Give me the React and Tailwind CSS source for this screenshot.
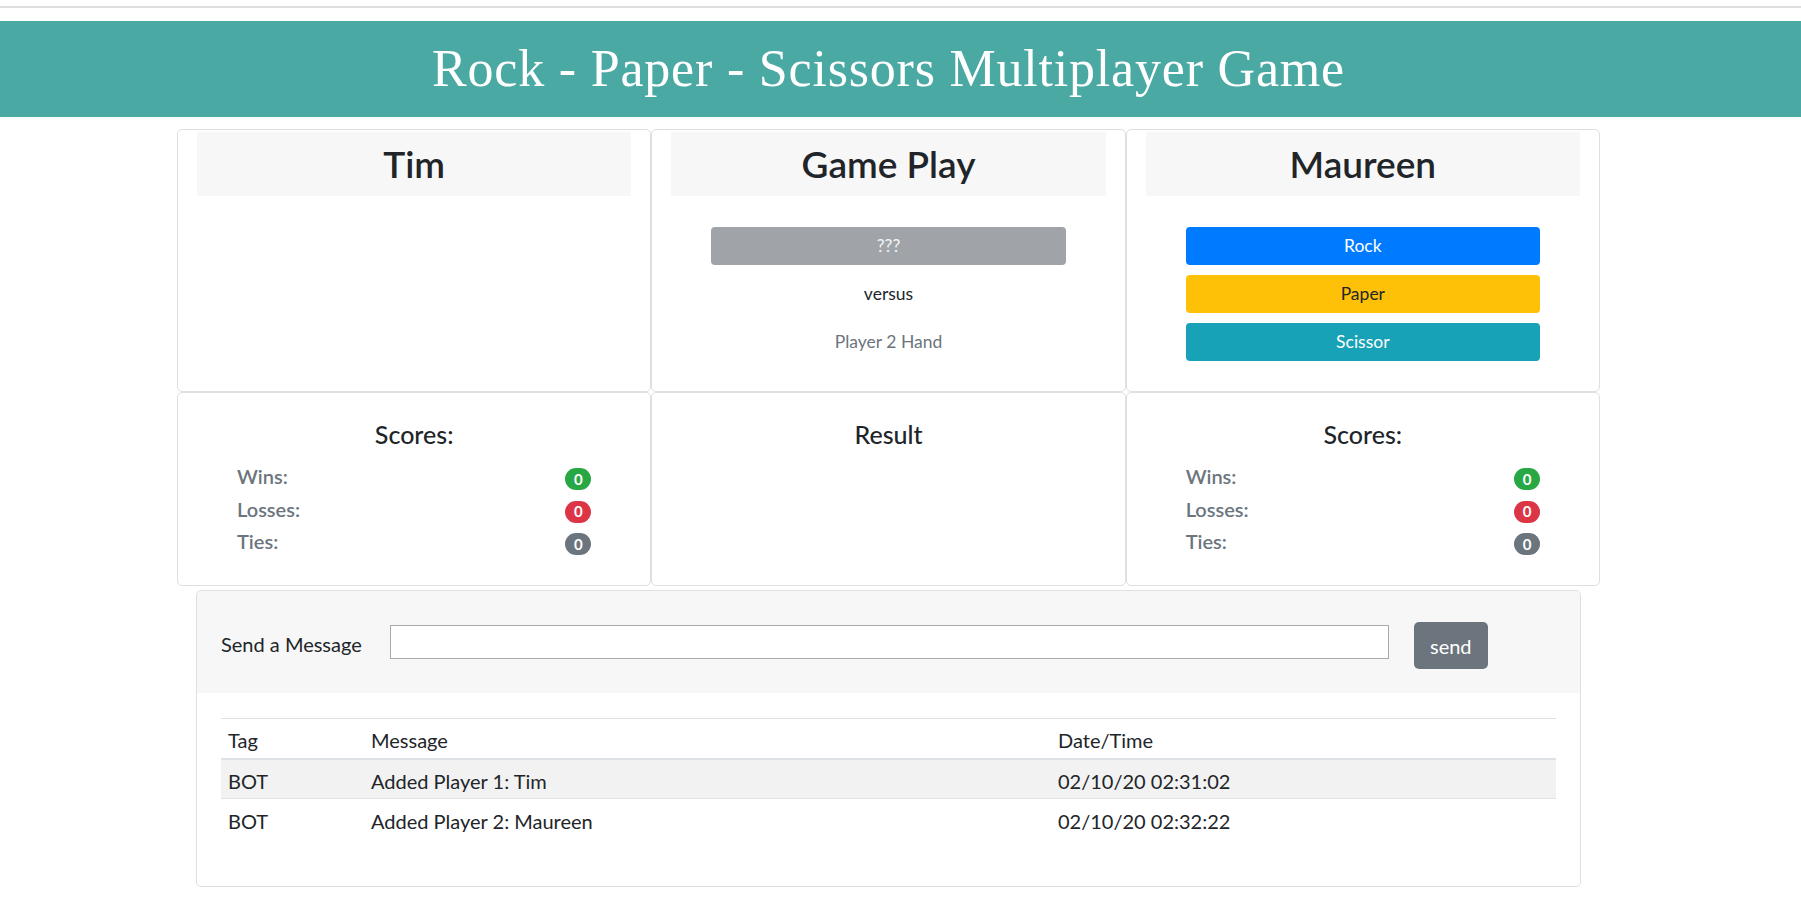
import React from "react";

const HANDS = [
  { label: "Rock", cls: "bg-[#007bff] text-white" },
  { label: "Paper", cls: "bg-[#ffc107] text-[#212529]" },
  { label: "Scissor", cls: "bg-[#17a2b8] text-white" },
];

const SCORES = [
  { label: "Wins:", value: 0, cls: "bg-[#28a745]" },
  { label: "Losses:", value: 0, cls: "bg-[#dc3545]" },
  { label: "Ties:", value: 0, cls: "bg-[#6c757d]" },
];

const MESSAGES = [
  { tag: "BOT", text: "Added Player 1: Tim", time: "02/10/20 02:31:02" },
  { tag: "BOT", text: "Added Player 2: Maureen", time: "02/10/20 02:32:22" },
];

function Card({ className = "", children }) {
  return (
    <div className={`border border-[#dfdfdf] rounded-[5px] bg-white ${className}`}>
      {children}
    </div>
  );
}

function CardTitle({ children }) {
  return (
    <div className="mt-[2px] mx-[19px] h-[64px] bg-[#f7f7f7] flex items-center justify-center text-[37px] font-semibold text-[#212529]">
      {children}
    </div>
  );
}

function ScoreCard() {
  return (
    <Card className="h-[194px] pt-[26px]">
      <div className="text-center text-[25px] leading-[30px] font-medium text-[#212529]">Scores:</div>
      <div className="mt-[12px] px-[59px]">
        {SCORES.map((s) => (
          <div key={s.label} className="h-[32.5px] flex justify-between items-start">
            <span className="text-[20px] leading-[30px] font-semibold text-[#6c757d]">{s.label}</span>
            <span
              className={`mt-[7px] w-[26px] h-[22px] rounded-full ${s.cls} text-white text-[15px] font-bold flex items-center justify-center`}
            >
              {s.value}
            </span>
          </div>
        ))}
      </div>
    </Card>
  );
}

export default function App() {
  return (
    <div className="min-h-screen bg-white font-['Lato','Segoe_UI',sans-serif] text-[#212529]">
      <div className="h-[6px]" />
      <div className="h-[2px] bg-[#dedede]" />
      <div className="mt-[13px] h-[96px] bg-[#4ba9a4] flex items-center">
        <h1 className="w-[1777px] text-center text-white font-['Liberation_Serif','Times_New_Roman',serif] text-[52px] tracking-[0.8px] leading-none">
          Rock - Paper - Scissors Multiplayer Game
        </h1>
      </div>

      <div className="ml-[177px] w-[1423px] mt-[12px]">
        <div className="grid grid-cols-3">
          <Card className="h-[263px]">
            <CardTitle>Tim</CardTitle>
          </Card>

          <Card className="h-[263px]">
            <CardTitle>Game Play</CardTitle>
            <div className="px-[59px] pt-[31px] flex flex-col gap-[10px] text-[17.5px]">
              <div className="h-[38px] rounded-[4px] bg-[#a0a4a9] text-[#f4f5f6] flex items-center justify-center">
                ???
              </div>
              <div className="h-[38px] flex items-center justify-center text-[#212529]">versus</div>
              <div className="h-[38px] flex items-center justify-center text-[#6c757d]">Player 2 Hand</div>
            </div>
          </Card>

          <Card className="h-[263px]">
            <CardTitle>Maureen</CardTitle>
            <div className="px-[59px] pt-[31px] flex flex-col gap-[10px]">
              {HANDS.map((h) => (
                <button
                  key={h.label}
                  className={`h-[38px] rounded-[4px] ${h.cls} text-[17.5px] flex items-center justify-center`}
                >
                  {h.label}
                </button>
              ))}
            </div>
          </Card>

          <ScoreCard />
          <Card className="h-[194px] pt-[26px]">
            <div className="text-center text-[25px] leading-[30px] font-medium text-[#212529]">Result</div>
          </Card>
          <ScoreCard />
        </div>

        <Card className="mt-[4px] mx-[19px] h-[297px]">
          <div className="h-[102px] bg-[#f7f7f7] rounded-t-[5px] flex items-start pl-[24px]">
            <span className="mt-[38px] text-[20px] leading-[30px] text-[#212529]">Send a Message</span>
            <input className="mt-[34px] ml-[28px] w-[999px] h-[34px] border border-[#a9a9a9] bg-white outline-none" />
            <button className="mt-[31px] ml-[25px] w-[74px] h-[47px] rounded-[5px] bg-[#6c757d] text-white text-[20px]">
              send
            </button>
          </div>
          <div className="px-[24px] pt-[25px]">
            <table className="w-full border-collapse text-[20px] text-[#212529]">
              <thead>
                <tr className="border-t border-b-2 border-[#dee2e6] h-[40px]">
                  <th className="w-[143px] px-[7px] pt-[4px] text-left font-normal">Tag</th>
                  <th className="w-[687px] px-[7px] pt-[4px] text-left font-normal">Message</th>
                  <th className="px-[7px] pt-[4px] text-left font-normal">Date/Time</th>
                </tr>
              </thead>
              <tbody>
                {MESSAGES.map((m, i) => (
                  <tr
                    key={m.time}
                    className={`h-[40px] ${i === 0 ? "bg-[#f2f2f2]" : "border-t border-[#dee2e6]"}`}
                  >
                    <td className="px-[7px] pt-[4px]">{m.tag}</td>
                    <td className="px-[7px] pt-[4px]">{m.text}</td>
                    <td className="px-[7px] pt-[4px]">{m.time}</td>
                  </tr>
                ))}
              </tbody>
            </table>
          </div>
        </Card>
      </div>
    </div>
  );
}
